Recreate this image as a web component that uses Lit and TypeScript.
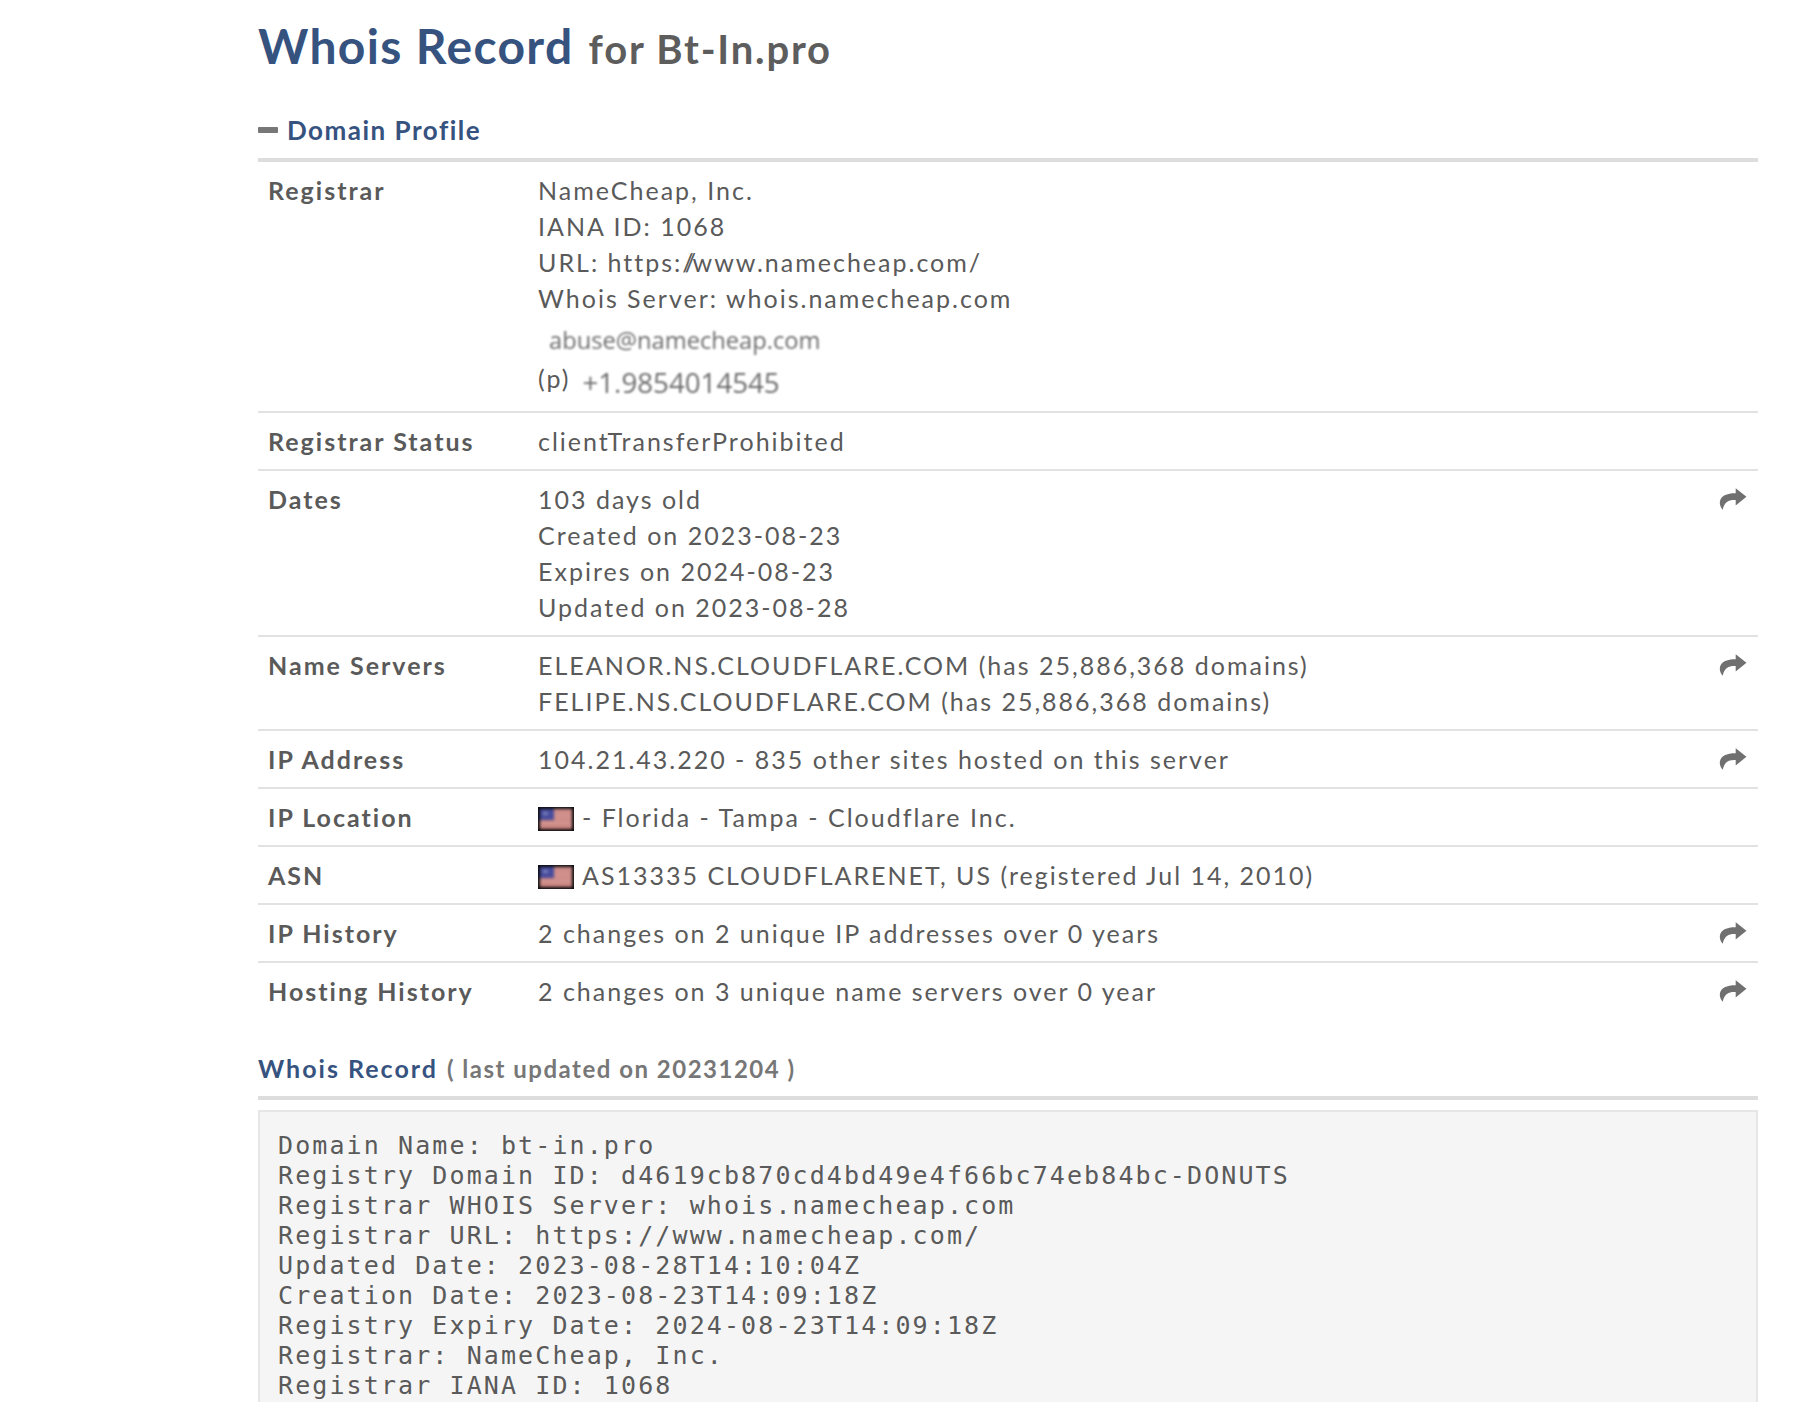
import { LitElement, html, css, svg } from "lit";
import { customElement } from "lit/decorators.js";

const share = html`<svg class="share" viewBox="0 0 26 22" aria-hidden="true"><path d="M15.5 1 L25.5 9 L15.5 17 L15.5 12 C10 11.6 5 13 3.5 21 C1.5 19 0.5 16 0.8 13.5 C1.5 8 7 5.6 15.5 5.6 Z"/></svg>`;

const flag = html`<svg class="flag" viewBox="0 0 36 24" aria-hidden="true">
  <rect width="36" height="24" fill="#0c0c10"/>
  <g class="flag-art">
    <rect x="2" y="2" width="32" height="20" fill="#dfaeaa"/>
    ${[3, 6.5, 10, 13.5, 17, 20].map((y) => svg`<rect x="2" y="${y}" width="32" height="1.6" fill="#bd6a66"/>`)}
    <rect x="2" y="2" width="14" height="11" fill="#464b9c"/>
    <rect x="5" y="5" width="5" height="3" fill="#7c80bb"/>
  </g>
</svg>`;

const rows: [string, unknown, boolean][] = [
  ["Registrar Status", html`clientTransferProhibited`, false],
  ["Dates", html`103 days old<br />Created on 2023-08-23<br />Expires on 2024-08-23<br />Updated on 2023-08-28`, true],
  ["Name Servers", html`ELEANOR.NS.CLOUDFLARE.COM (has 25,886,368 domains)<br />FELIPE.NS.CLOUDFLARE.COM (has 25,886,368 domains)`, true],
  ["IP Address", html`104.21.43.220 - 835 other sites hosted on this server`, true],
  ["IP Location", html`<span class="flagline">${flag}<span>- Florida - Tampa - Cloudflare Inc.</span></span>`, false],
  ["ASN", html`<span class="flagline">${flag}<span>AS13335 CLOUDFLARENET, US (registered Jul 14, 2010)</span></span>`, false],
  ["IP History", html`2 changes on 2 unique IP addresses over 0 years`, true],
  ["Hosting History", html`2 changes on 3 unique name servers over 0 year`, true],
];

const record = `Domain Name: bt-in.pro
Registry Domain ID: d4619cb870cd4bd49e4f66bc74eb84bc-DONUTS
Registrar WHOIS Server: whois.namecheap.com
Registrar URL: https://www.namecheap.com/
Updated Date: 2023-08-28T14:10:04Z
Creation Date: 2023-08-23T14:09:18Z
Registry Expiry Date: 2024-08-23T14:09:18Z
Registrar: NameCheap, Inc.
Registrar IANA ID: 1068`;

@customElement("app-root")
export class AppRoot extends LitElement {
  static styles = css`
    :host {
      display: block;
      height: 1402px;
      overflow: hidden;
      background: #fff;
      color: #5a5a5a;
      font-family: Lato, sans-serif;
    }
    .page {
      margin: 0 52px 0 258px;
    }
    h1 {
      margin: 0;
      padding-top: 16px;
      height: 110px;
      box-sizing: border-box;
      font-size: 48px;
      line-height: 60px;
      font-weight: 700;
      letter-spacing: 1.35px;
      color: #36527f;
      white-space: nowrap;
    }
    h1 small {
      font-size: 40px;
      font-weight: 700;
      letter-spacing: 1.8px;
      color: #5d5d5d;
      margin-left: 2px;
    }
    .profile {
      display: flex;
      align-items: center;
      gap: 9px;
      height: 40px;
      padding-bottom: 8px;
      font-size: 26px;
      font-weight: 700;
      letter-spacing: 1.5px;
      color: #36527f;
      border-bottom: 4px solid #ddd;
    }
    .minus {
      width: 20px;
      height: 6px;
      border-radius: 1px;
      background: #777;
    }
    .row {
      display: flex;
      border-bottom: 2px solid #e2e2e2;
      padding: 10px 0 10px;
      font-size: 25px;
      line-height: 36px;
      letter-spacing: 2px;
    }
    .row:first-child {
      padding-bottom: 11px;
    }
    .row:last-child {
      border-bottom: 0;
    }
    .label {
      flex: 0 0 280px;
      padding-left: 10px;
      box-sizing: border-box;
      font-weight: 700;
    }
    .value {
      flex: 1;
      white-space: nowrap;
    }
    .slashes {
      letter-spacing: -3.4px;
    }
    .contact {
      display: block;
      font-family: "Open Sans", sans-serif;
      letter-spacing: 0;
      color: #6c6c6c;
      filter: blur(0.8px);
    }
    .email {
      font-size: 23.7px;
      line-height: 40px;
      padding-left: 11px;
      margin-top: 4px;
    }
    .phone-line {
      display: flex;
      gap: 12px;
      line-height: 36px;
    }
    .phone {
      font-size: 27.7px;
      margin-top: 4px;
    }
    .share {
      width: 28px;
      height: 24px;
      margin: 6px 11px 0 0;
      fill: #707070;
      flex: none;
    }
    .flagline {
      display: flex;
      align-items: center;
      gap: 8px;
      height: 36px;
    }
    .flag {
      width: 36px;
      height: 24px;
      margin-top: 4px;
    }
    .flag-art {
      filter: blur(1.4px);
    }
    .record-head {
      display: flex;
      align-items: center;
      gap: 9px;
      margin-top: 26px;
      height: 46px;
      padding-bottom: 5px;
      font-size: 25px;
      font-weight: 700;
      letter-spacing: 2px;
      color: #36527f;
      border-bottom: 4px solid #ddd;
    }
    .record-head span {
      font-size: 24px;
      letter-spacing: 1.5px;
      color: #777;
    }
    pre {
      margin: 10px 0 0;
      padding: 19px 18px 0;
      background: #f5f5f5;
      border: 2px solid #e6e6e6;
      font-family: "DejaVu Sans Mono", monospace;
      font-size: 25px;
      line-height: 30px;
      letter-spacing: 2.1px;
      color: #5a5a5a;
      height: 400px;
    }
  `;

  render() {
    return html`<div class="page">
      <h1>Whois Record <small>for Bt-In.pro</small></h1>
      <div class="profile"><i class="minus"></i>Domain Profile</div>
      <div class="rows">
        <div class="row">
          <div class="label">Registrar</div>
          <div class="value">
            NameCheap, Inc.<br />IANA ID: 1068<br />URL: https:<span class="slashes">//</span>www.namecheap.com/<br />Whois Server: whois.namecheap.com
            <span class="contact email">abuse@namecheap.com</span>
            <div class="phone-line"><span>(p)</span><span class="contact phone">+1.9854014545</span></div>
          </div>
        </div>
        ${rows.map(
          ([label, value, hasShare]) => html`<div class="row">
            <div class="label">${label}</div>
            <div class="value">${value}</div>
            ${hasShare ? share : null}
          </div>`
        )}
      </div>
      <div class="record-head">Whois Record <span>( last updated on 20231204 )</span></div>
      <pre>${record}</pre>
    </div>`;
  }
}
